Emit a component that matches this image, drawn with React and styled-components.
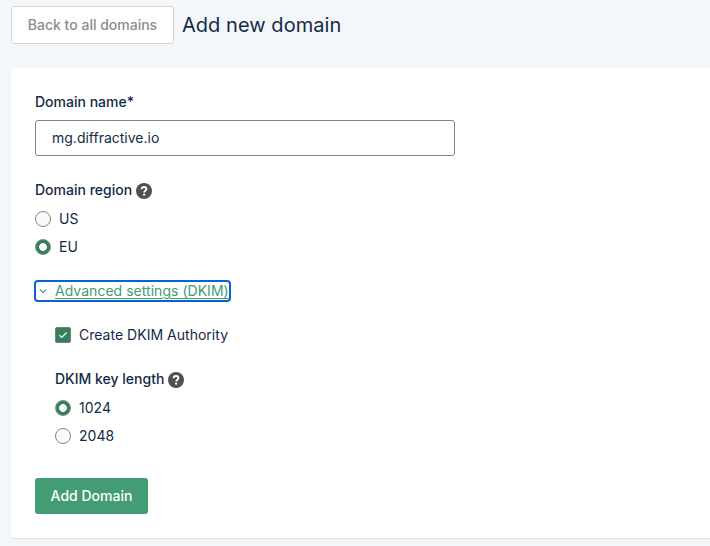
import React from "react";
import styled, { createGlobalStyle } from "styled-components";

const GlobalStyle = createGlobalStyle`
  * { box-sizing: border-box; }
  body {
    margin: 0;
    background: #f4f7fa;
    color: #132b47;
    font: 400 14px/20px Inter, "Liberation Sans", sans-serif;
    overflow: hidden;
  }
`;

const Page = styled.main`
  height: 546px;
  padding: 6px 0 0 11px;
`;

const Header = styled.header`
  display: flex;
  align-items: center;
  height: 38px;
  margin-bottom: 24px;
`;

const BackButton = styled.button`
  width: 163px;
  height: 38px;
  padding: 0;
  border: 1px solid #d6d6d6;
  border-radius: 3px;
  background: #fff;
  color: #8c8c8c;
  font: 500 14px/20px Inter, sans-serif;
`;

const Title = styled.h1`
  margin: 0 0 0 8px;
  font-size: 20px;
  line-height: 28px;
  font-weight: 400;
  letter-spacing: 0.04px;
`;

const Card = styled.form`
  height: 470px;
  padding: 24px;
  background: #fff;
  border-radius: 3px 0 0 3px;
  box-shadow: 0 1px 1px #d9e1e8;
`;

const Label = styled.div`
  display: flex;
  align-items: center;
  gap: 4px;
  height: 20px;
  font-weight: 500;
`;

const Input = styled.input`
  display: block;
  width: 420px;
  height: 36px;
  margin: 8px 0 24px;
  padding: 0 16px 1px;
  border: 1px solid #858585;
  border-radius: 3px;
  background: #fff;
  color: #132b47;
  font: 400 14px/20px Inter, sans-serif;
  outline: none;
`;

const Choices = styled.div`
  display: grid;
  gap: 8px;
  padding-top: 9px;
`;

const Choice = styled.label`
  display: flex;
  align-items: center;
  gap: 8px;
  height: 20px;
  letter-spacing: 0.02px;
`;

const Radio = styled.input.attrs({ type: "radio" })`
  appearance: none;
  flex: none;
  width: 16px;
  height: 16px;
  margin: 0;
  border: 1px solid #858585;
  border-radius: 50%;
  background: #fafafa;
  &:checked {
    background: radial-gradient(circle, #fff 3.5px, #34805a 4.3px);
  }
`;

const CheckBox = styled.span`
  display: grid;
  place-items: center;
  width: 16px;
  height: 16px;
  border: 1px solid #71837a;
  border-radius: 2px;
  background: #34805a;
`;

const Disclosure = styled.button`
  display: flex;
  align-items: center;
  width: 197px;
  height: 22px;
  margin: 23px 0 0 -1px;
  padding: 0 0 0 3px;
  border: 2px solid #0b63ce;
  border-radius: 4px;
  background: #fff;
  color: #439c73;
  font: 400 14px/20px Inter, sans-serif;
  letter-spacing: 0.03px;
`;

const Chevron = styled.svg`
  flex: none;
`;

const LinkText = styled.span`
  margin-left: 8px;
  text-decoration: underline;
  text-decoration-thickness: 1px;
  text-underline-offset: 2px;
  text-decoration-skip-ink: auto;
  white-space: nowrap;
`;

const Advanced = styled.section`
  padding: 23px 0 0 20px;
`;

const KeyLength = styled.div`
  margin-top: 24px;
`;

const SubmitButton = styled.button`
  display: block;
  width: 113px;
  height: 36px;
  margin-top: 32px;
  padding: 0;
  border: 0;
  border-radius: 3px;
  background: #439c73;
  color: #fff;
  font: 500 14px/20px Inter, sans-serif;
`;

const HelpSvg = styled.svg`
  flex: none;
  margin-top: 2px;
`;

function HelpIcon() {
  return (
    <HelpSvg width="16" height="16" viewBox="0 0 16 16" aria-label="Help">
      <circle cx="8" cy="8" r="8" fill="#505050" />
      <path d="M5.6 6.2C5.7 4.8 6.6 4 8 4s2.4.7 2.4 2c0 1.6-2.2 1.7-2.2 3.4" fill="none" stroke="#fff" strokeWidth="1.9" />
      <circle cx="8.1" cy="11.7" r="1.15" fill="#fff" />
    </HelpSvg>
  );
}

export default function App() {
  return (
    <>
      <GlobalStyle />
      <Page>
        <Header>
          <BackButton>Back to all domains</BackButton>
          <Title>Add new domain</Title>
        </Header>
        <Card>
          <Label>Domain name*</Label>
          <Input defaultValue="mg.diffractive.io" aria-label="Domain name" />
          <Label>Domain region<HelpIcon /></Label>
          <Choices>
            <Choice><Radio name="region" />US</Choice>
            <Choice><Radio name="region" defaultChecked />EU</Choice>
          </Choices>
          <Disclosure type="button">
            <Chevron width="8" height="8" viewBox="0 0 8 8" fill="none">
              <path d="M.8 2.3 4 5.5l3.2-3.2" stroke="#439c73" strokeWidth="1.2" />
            </Chevron>
            <LinkText>Advanced settings (DKIM)</LinkText>
          </Disclosure>
          <Advanced>
            <Choice>
              <CheckBox>
                <svg width="10" height="10" viewBox="0 0 10 10" fill="none">
                  <path d="m1.4 5.2 2.3 2.3 5-5" stroke="#fff" strokeWidth="1.2" />
                </svg>
              </CheckBox>
              Create DKIM Authority
            </Choice>
            <KeyLength>
              <Label>DKIM key length<HelpIcon /></Label>
              <Choices>
                <Choice><Radio name="length" defaultChecked />1024</Choice>
                <Choice><Radio name="length" />2048</Choice>
              </Choices>
            </KeyLength>
          </Advanced>
          <SubmitButton type="button">Add Domain</SubmitButton>
        </Card>
      </Page>
    </>
  );
}
